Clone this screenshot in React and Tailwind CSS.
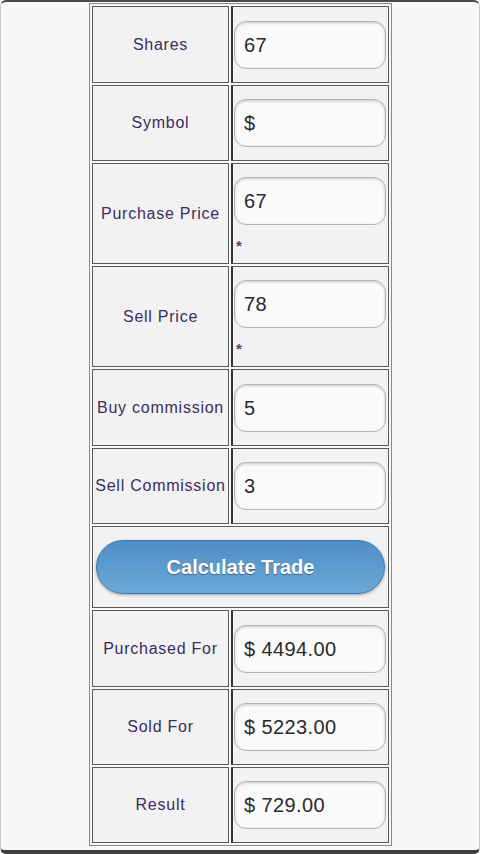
import React from 'react';

const font = { fontFamily: '"Liberation Sans", Arial, sans-serif' };

const Label = ({ children }) => (
  <div className="flex items-center justify-center border border-[#5a5a5a] bg-[#f2f2f2] text-[16px] tracking-[0.75px] text-[#3a2d60] whitespace-nowrap">
    {children}
  </div>
);

const Field = ({ value }) => (
  <div className="h-[48px] w-[152px] rounded-[12px] border border-[#b5b5b5] bg-[#fafafa] shadow-[inset_0_1px_3px_rgba(0,0,0,0.2)] flex items-center pl-[9px] text-[20px] tracking-[0.4px] text-[#2a2a2a]">
    {value}
  </div>
);

const Row = ({ label, value, h, star }) => (
  <div className={`grid grid-cols-[137px_158px] gap-[2px] ${h}`}>
    <Label>{label}</Label>
    <div className={`flex flex-col border border-[#5a5a5a] border-l-2 border-l-[#333] bg-[#f2f2f2] pl-[1px] ${star ? 'justify-start pt-[13px]' : 'justify-center'}`}>
      <Field value={value} />
      {star && <span className="mt-[11px] pl-[2px] text-[15px] leading-[20px] font-bold text-[#4a4a5a]">*</span>}
    </div>
  </div>
);

export default function App() {
  return (
    <div style={font} className="h-[854px] w-[480px] bg-[#f7f7f7] border-t-2 border-t-[#4a4a4a] border-x border-x-[#c8c8c8] border-b-4 border-b-[#3e3e3e] rounded-[6px] pt-[1px] overflow-hidden">
      <div className="ml-[88px] w-[303px] border border-[#8a8a8a] p-[2px] flex flex-col gap-[2px]">
        <Row label="Shares" value="67" h="h-[77px]" />
        <Row label="Symbol" value="$" h="h-[76px]" />
        <Row label="Purchase Price" value="67" h="h-[101px]" star />
        <Row label="Sell Price" value="78" h="h-[101px]" star />
        <Row label="Buy commission" value="5" h="h-[77px]" />
        <Row label="Sell Commission" value="3" h="h-[76px]" />
        <div className="h-[82px] border border-[#5a5a5a] bg-[#f2f2f2] flex items-center px-[3px]">
          <button className="h-[54px] w-full rounded-full border border-[#3a7ab0] bg-gradient-to-b from-[#4f8fc6] to-[#6aa9d7] shadow-[0_1px_3px_rgba(0,0,0,0.35)] text-white font-bold text-[20px] [text-shadow:0_1px_1px_rgba(0,0,0,0.4)]">
            Calculate Trade
          </button>
        </div>
        <Row label="Purchased For" value="$ 4494.00" h="h-[77px]" />
        <Row label="Sold For" value="$ 5223.00" h="h-[76px]" />
        <Row label="Result" value="$ 729.00" h="h-[76px]" />
      </div>
    </div>
  );
}
